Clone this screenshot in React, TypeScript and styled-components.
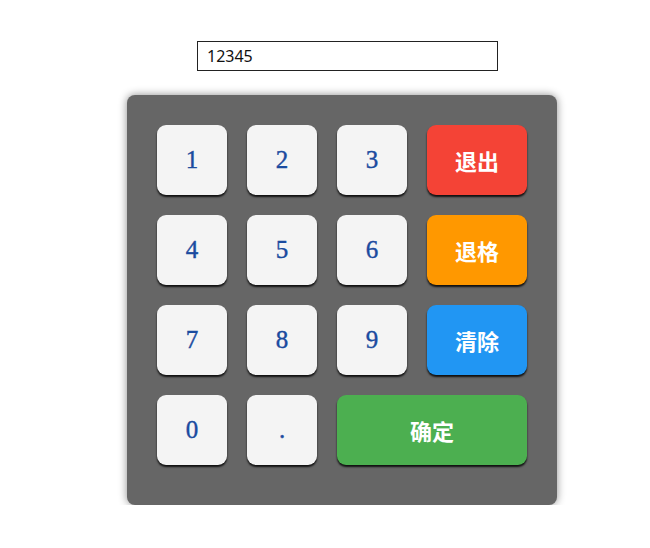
import React, { useState } from "react";
import styled, { createGlobalStyle } from "styled-components";

const Global = createGlobalStyle`
  html, body { margin: 0; padding: 0; background: #ffffff; }
  body { font-family: "Liberation Serif", "Noto Sans CJK SC", serif; }
`;

const Page = styled.div`
  display: flex;
  flex-direction: column;
  align-items: flex-start;
  padding: 41px 0 0 0;
`;

const Display = styled.input`
  box-sizing: border-box;
  margin-left: 197px;
  width: 301px;
  height: 30px;
  border: 1px solid #222;
  padding: 0 9px;
  font-family: "Noto Sans", "Open Sans", sans-serif;
  font-size: 16px;
  color: #111;
  outline: none;
  background: #fff;
`;

const Panel = styled.div`
  box-sizing: border-box;
  margin: 24px 0 0 127px;
  width: 430px;
  height: 410px;
  padding: 30px;
  background: #666666;
  border-radius: 8px;
  box-shadow: 0 0 8px rgba(0, 0, 0, 0.45);
  display: grid;
  grid-template-columns: 70px 70px 70px 100px;
  grid-template-rows: repeat(4, 70px);
  gap: 20px;
`;

type Variant = "num" | "red" | "orange" | "blue" | "green";

const colors: Record<Variant, string> = {
  num: "#f4f4f4",
  red: "#f44336",
  orange: "#ff9800",
  blue: "#2196f3",
  green: "#4caf50",
};

const Key = styled.button<{ $v: Variant; $span?: number }>`
  border: none;
  border-radius: 9px;
  background: ${(p) => colors[p.$v]};
  box-shadow: 0 2px 2px rgba(0, 0, 0, 0.85);
  grid-column: ${(p) => (p.$span ? `span ${p.$span}` : "auto")};
  color: ${(p) => (p.$v === "num" ? "#1a4b9f" : "#ffffff")};
  font-family: ${(p) =>
    p.$v === "num"
      ? `"Liberation Serif", serif`
      : `"Noto Sans CJK SC", sans-serif`};
  font-size: ${(p) => (p.$v === "num" ? "25px" : "22px")};
  font-weight: ${(p) => (p.$v === "num" ? 400 : 700)};
  -webkit-text-stroke: ${(p) => (p.$v === "num" ? "0.4px #1a4b9f" : "0")};
  display: flex;
  align-items: center;
  justify-content: center;
  padding: 0;
  cursor: pointer;
`;

export default function App() {
  const [value, setValue] = useState("12345");
  const press = (k: string) => setValue((v) => v + k);
  return (
    <>
      <Global />
      <Page>
        <Display value={value} onChange={(e) => setValue(e.target.value)} />
        <Panel>
          <Key $v="num" onClick={() => press("1")}>1</Key>
          <Key $v="num" onClick={() => press("2")}>2</Key>
          <Key $v="num" onClick={() => press("3")}>3</Key>
          <Key $v="red">退出</Key>
          <Key $v="num" onClick={() => press("4")}>4</Key>
          <Key $v="num" onClick={() => press("5")}>5</Key>
          <Key $v="num" onClick={() => press("6")}>6</Key>
          <Key $v="orange" onClick={() => setValue((v) => v.slice(0, -1))}>退格</Key>
          <Key $v="num" onClick={() => press("7")}>7</Key>
          <Key $v="num" onClick={() => press("8")}>8</Key>
          <Key $v="num" onClick={() => press("9")}>9</Key>
          <Key $v="blue" onClick={() => setValue("")}>清除</Key>
          <Key $v="num" onClick={() => press("0")}>0</Key>
          <Key $v="num" onClick={() => press(".")}>.</Key>
          <Key $v="green" $span={2}>确定</Key>
        </Panel>
      </Page>
    </>
  );
}
